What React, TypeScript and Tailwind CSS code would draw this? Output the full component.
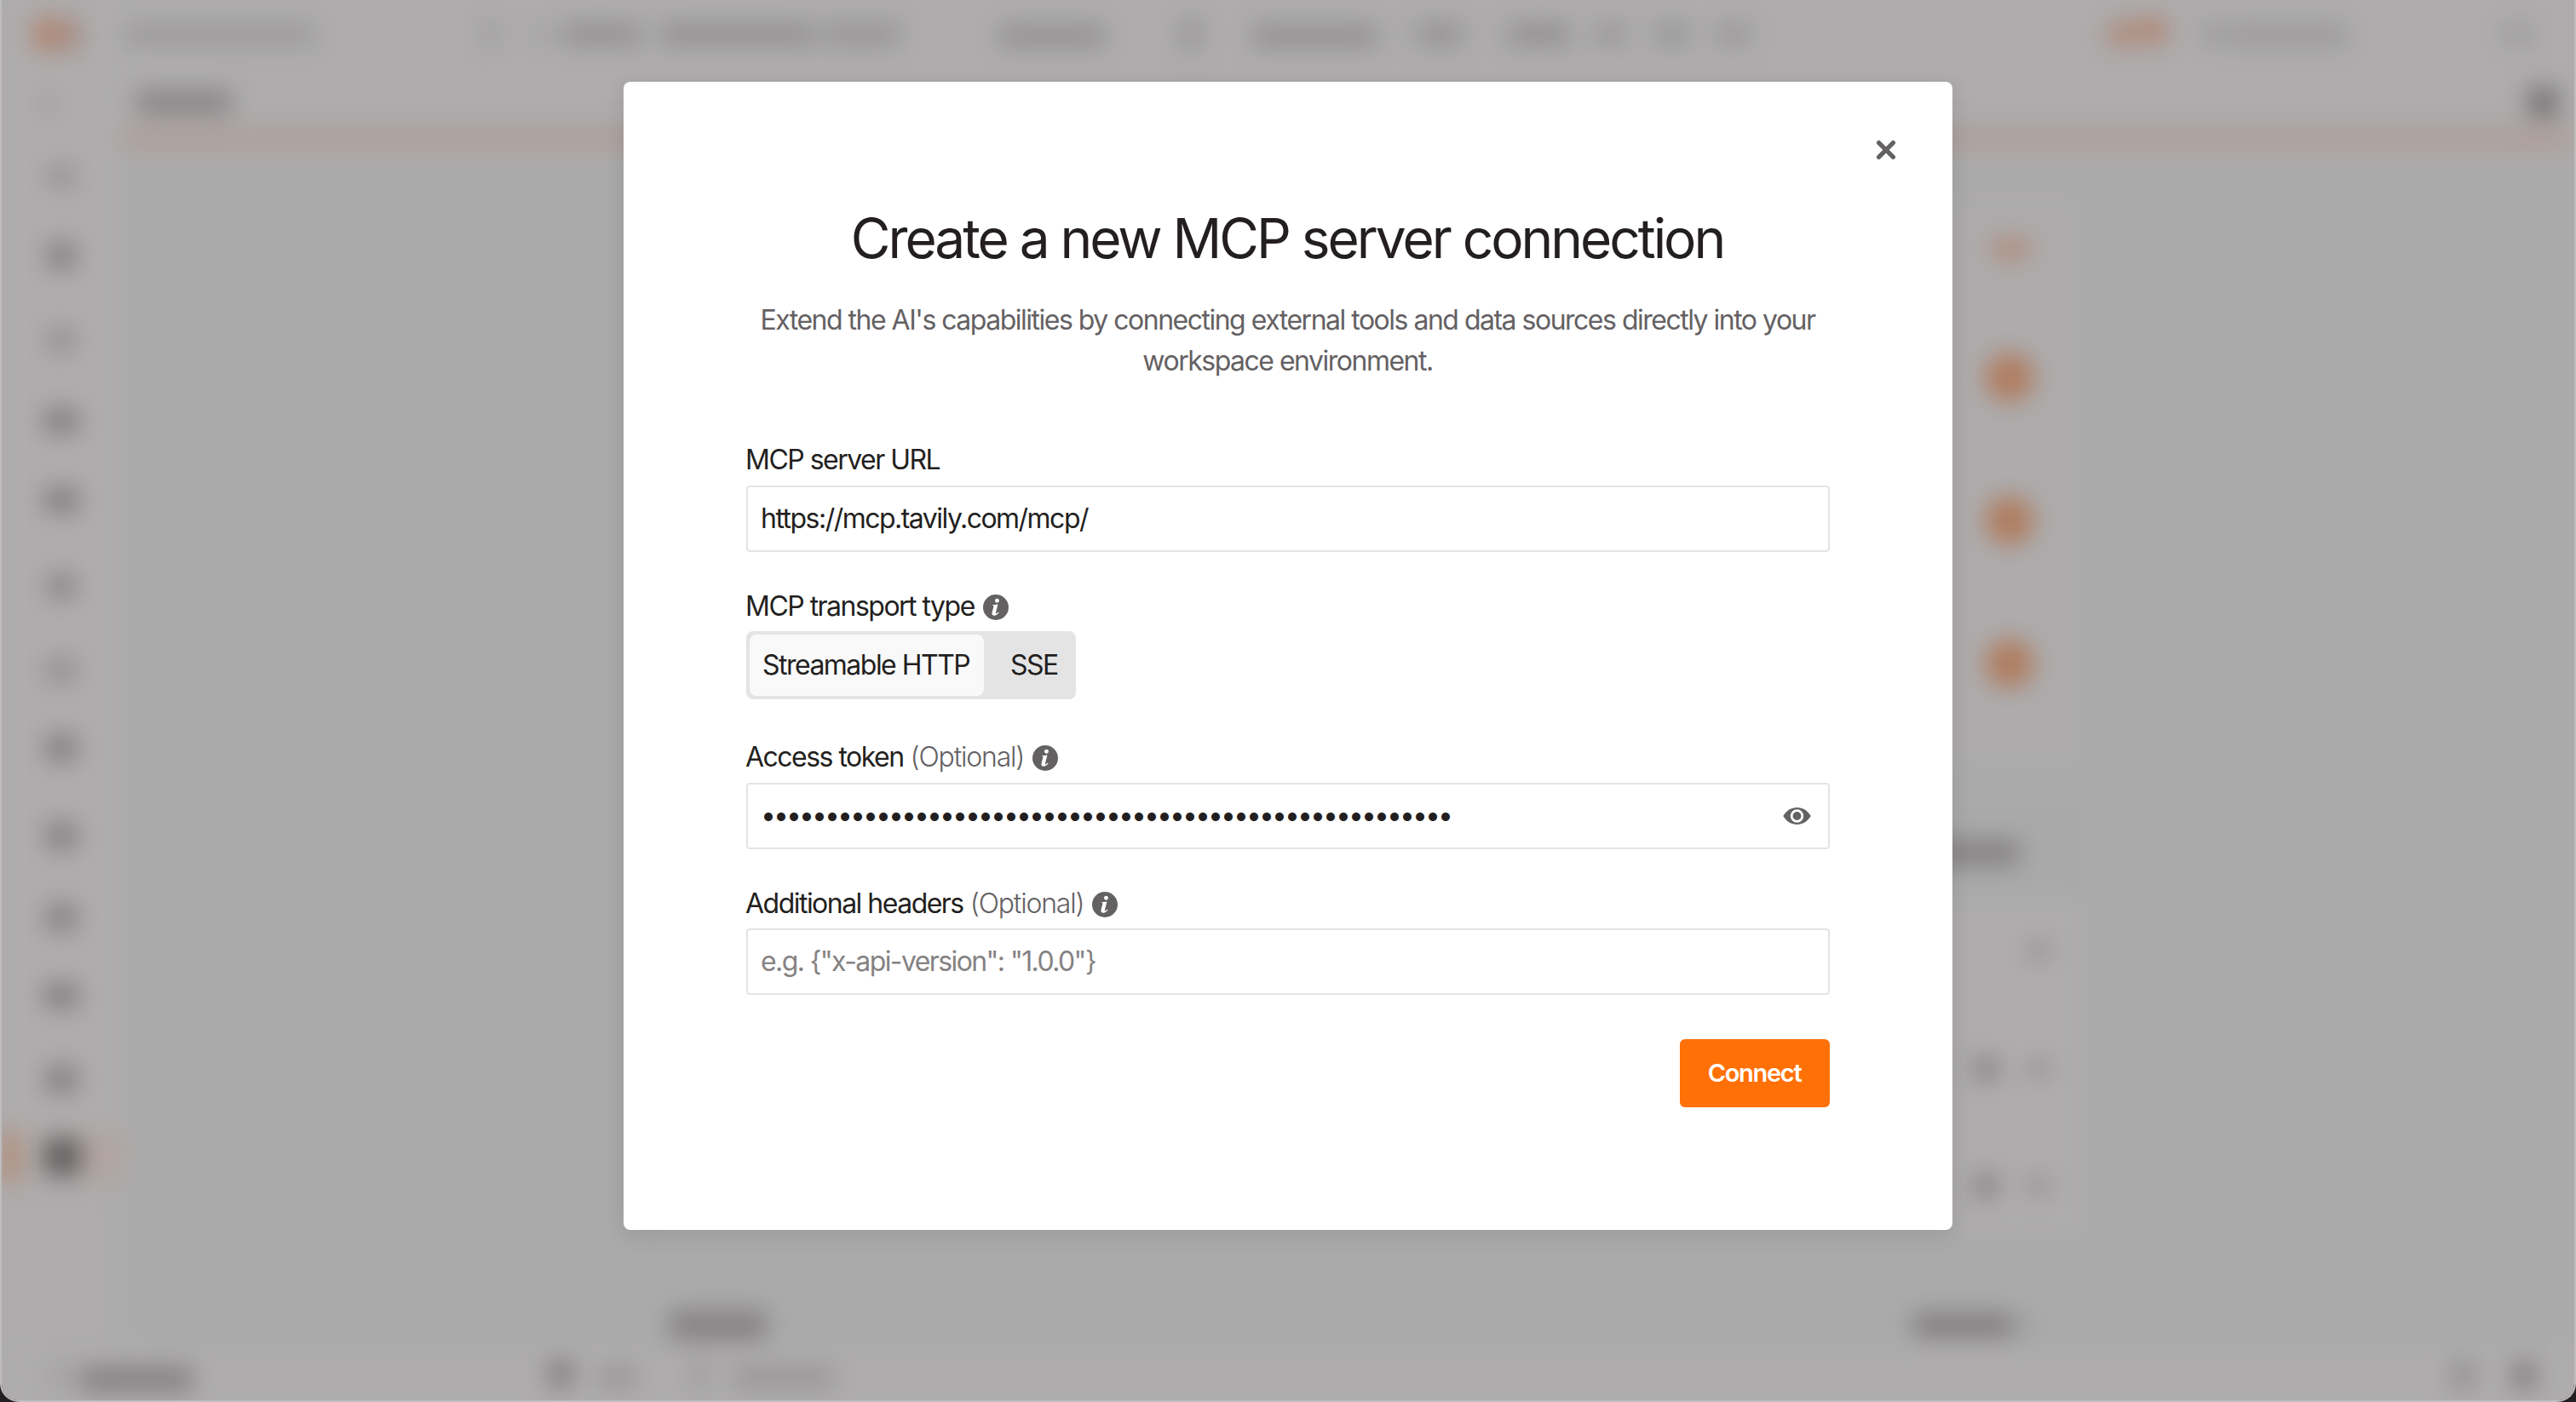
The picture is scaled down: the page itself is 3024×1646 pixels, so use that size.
import type { ReactNode } from "react";

/* ---------- Icons ---------- */

function CloseIcon() {
  return (
    <svg className="size-6" viewBox="0 0 24 24" fill="none" stroke="#646163" strokeWidth="5.2" strokeLinecap="round">
      <path d="M3.6 3.6 20.4 20.4M20.4 3.6 3.6 20.4" />
    </svg>
  );
}

function InfoIcon() {
  return (
    <svg className="size-[30px] shrink-0" viewBox="0 0 512 512">
      <circle cx="256" cy="256" r="256" fill="#646163" />
      <g fill="#fff">
        <circle cx="281" cy="124" r="41" />
        <path d="M186 213c30-4 68-10 112-17l-40 158c-5 19-3 26 5 26 11 0 24-10 42-31l14 10c-30 45-62 63-94 63-36 0-54-22-44-62l30-117c4-16 0-20-25-21z" />
      </g>
    </svg>
  );
}

function EyeIcon() {
  return (
    <svg className="h-5 w-[33px]" viewBox="0 0 33 20">
      <path d="M0.3 10C4 3.6 10 0 16.5 0S29 3.6 32.7 10C29 16.4 23 20 16.5 20S4 16.4 0.3 10z" fill="#646163" />
      <circle cx="16.5" cy="10" r="6.3" fill="none" stroke="#fff" strokeWidth="2.8" />
    </svg>
  );
}

/* ---------- Blurred application behind the dialog ---------- */

function Blob({ className }: { className: string }) {
  return <span className={`block shrink-0 ${className}`} />;
}

function TopBar() {
  return (
    <header className="flex h-20 shrink-0 items-center">
      <Blob className="ml-[36px] h-10 w-8 rounded-lg bg-[#b08875]" />
      <Blob className="h-10 w-6 rounded-lg bg-[#a68c82]" />
      <Blob className="ml-[54px] h-6 w-[220px] bg-[#9b999a]" />
      <Blob className="ml-[202px] h-8 w-2.5 bg-[#949293]" />
      <Blob className="ml-[46px] h-4 w-6 bg-[#a09e9f]" />
      <Blob className="ml-3 h-6 w-[90px] bg-[#918f90]" />
      <Blob className="ml-6 h-6 w-[180px] bg-[#918f90]" />
      <Blob className="ml-2.5 h-6 w-[90px] bg-[#969495]" />
      <Blob className="ml-[118px] mt-1 h-6 w-[122px] bg-[#918f90]" />
      <Blob className="ml-[92px] h-9 w-5 bg-[#949293]" />
      <Blob className="ml-[62px] mt-1 h-6 w-[146px] bg-[#918f90]" />
      <Blob className="ml-[30px] h-3 w-3 bg-[#a19fa0]" />
      <Blob className="ml-2 h-6 w-[50px] bg-[#929091]" />
      <Blob className="ml-[38px] h-3 w-3 bg-[#a19fa0]" />
      <Blob className="ml-2 h-6 w-[68px] bg-[#908e8f]" />
      <Blob className="ml-[30px] h-6 w-[36px] bg-[#989697]" />
      <Blob className="ml-[36px] h-6 w-[38px] bg-[#979596]" />
      <Blob className="ml-[34px] h-6 w-[38px] bg-[#989697]" />
      <Blob className="ml-[420px] h-8 w-8 rounded-full bg-[#b08875]" />
      <Blob className="-mt-2 ml-0.5 h-8 w-9 rounded-lg bg-[#b08875]" />
      <Blob className="ml-[44px] h-5 w-5 bg-[#949293]" />
      <Blob className="ml-2 mt-0.5 h-6 w-[138px] bg-[#9b999a]" />
      <Blob className="ml-[186px] h-5 w-8 bg-[#9a9899]" />
    </header>
  );
}

function TabBar() {
  return (
    <div className="flex h-[94px] shrink-0 flex-col justify-end">
      <div className="flex items-center justify-between pb-[12px] pl-[18px] pr-[19px]">
        <Blob className="h-7 w-[112px] bg-[#888586]" />
        <Blob className="size-9 rounded-lg bg-[#777475]" />
      </div>
      <Blob className="h-6 w-full bg-[#ae9d97]" />
    </div>
  );
}

const NAV = [
  "mt-[111px] h-6 w-5 bg-[#a09e9f] -ml-8",
  "mt-[60px] h-6 w-8 bg-[#929091]",
  "mt-[65px] h-8 w-8 bg-[#838081]",
  "mt-[69px] h-7 w-8 bg-[#929091]",
  "mt-[67px] h-7 w-10 bg-[#807d7e]",
  "mt-[65px] h-7 w-10 bg-[#807d7e]",
  "mt-[73px] h-7 w-8 bg-[#878485]",
  "mt-[71px] h-7 w-9 bg-[#929091]",
  "mt-[61px] h-8 w-9 bg-[#838081]",
  "mt-[71px] h-8 w-9 bg-[#848182]",
  "mt-[64px] h-8 w-9 bg-[#868384]",
  "mt-[62px] h-7 w-10 bg-[#807d7e]",
  "mt-[68px] h-8 w-9 bg-[#838081]",
];

function Sidebar() {
  return (
    <nav className="flex w-[140px] shrink-0 flex-col items-center bg-[#aeacad]">
      {NAV.map((c, i) => (
        <Blob key={i} className={c} />
      ))}
      <div className="mt-[45px] flex h-[60px] w-full items-center bg-gradient-to-r from-[#afadae] to-[#b1a39d]">
        <Blob className="h-full w-5 bg-[#b18870]" />
        <Blob className="ml-[29px] size-11 rounded-lg bg-[#636061]" />
      </div>
    </nav>
  );
}

function RowActions({ className, both }: { className: string; both?: boolean }) {
  return (
    <div className={`flex items-center justify-end gap-9 pr-[35px] ${className}`}>
      {both && <Blob className="size-7 rounded bg-[#868384]" />}
      <Blob className="size-6 bg-[#959394]" />
    </div>
  );
}

function Content() {
  return (
    <main className="flex flex-1 flex-col pl-[620px]">
      <section className="mt-[62px] flex h-[660px] w-[1678px] flex-col items-end bg-[#adabac] pr-[52px]">
        <Blob className="mr-1.5 mt-[44px] h-6 w-11 bg-[#b08c7a]" />
        <Blob className="mt-[110px] size-[58px] rounded-full bg-[#b07d60]" />
        <Blob className="mt-[110px] size-[58px] rounded-full bg-[#b07d60]" />
        <Blob className="mt-[110px] size-[58px] rounded-full bg-[#b07d60]" />
      </section>
      <section className="mt-[52px] flex h-[500px] w-[1678px] flex-col bg-[#aaa9aa]">
        <div className="flex h-[106px] items-center justify-end pr-[70px]">
          <Blob className="h-7 w-[120px] bg-[#827f80]" />
        </div>
        <div className="flex flex-1 flex-col bg-[#aeacad]">
          <RowActions className="mt-[50px] h-6" />
          <RowActions className="mt-[115px] h-6" both />
          <RowActions className="mt-[113px] h-6" both />
        </div>
      </section>
      <section className="mt-[88px] flex h-[40px] w-[1678px] items-center justify-between pl-[24px] pr-[66px]">
        <Blob className="h-9 w-[114px] bg-[#868384]" />
        <div className="flex items-center gap-2">
          <Blob className="h-7 w-[116px] bg-[#807d7e]" />
          <Blob className="-mr-3 h-4 w-4 bg-[#9a9899]" />
        </div>
      </section>
    </main>
  );
}

function StatusBar() {
  return (
    <footer className="flex h-[60px] shrink-0 items-center bg-[#aeacad] pt-[2px]">
      <Blob className="ml-[56px] h-5 w-6 bg-[#9c9a9b]" />
      <Blob className="mt-2 ml-3 h-7 w-[132px] bg-[#827f80]" />
      <Blob className="-mt-1 ml-[418px] h-8 w-[28px] bg-[#807d7e]" />
      <Blob className="mt-1 ml-[30px] h-6 w-[46px] bg-[#979596]" />
      <Blob className="-mt-1 ml-[66px] h-8 w-3.5 bg-[#959394]" />
      <Blob className="mt-1 ml-[32px] h-6 w-[120px] bg-[#979596]" />
      <Blob className="ml-auto h-8 w-7 bg-[#929091]" />
      <Blob className="ml-[44px] mr-[45px] h-8 w-7 bg-[#827f80]" />
    </footer>
  );
}

function BlurredApp() {
  return (
    <div aria-hidden="true" className="relative h-full overflow-hidden bg-[#aeacad]">
      <div className="flex h-full w-[3020px] blur-[14px]">
        <div className="flex h-full w-full flex-col">
          <div className="flex min-h-0 flex-1">
            <div className="-mr-[140px] h-full w-[140px] shrink-0">
              <Sidebar />
            </div>
            <div className="flex min-w-0 flex-1 flex-col">
              <TopBar />
              <div className="ml-[140px] flex min-h-0 flex-1 flex-col">
                <TabBar />
                <div className="flex min-h-0 flex-1 overflow-hidden bg-[#abaaab]">
                  <Content />
                </div>
              </div>
            </div>
          </div>
          <StatusBar />
        </div>
      </div>
    </div>
  );
}

/* ---------- Dialog ---------- */

function Label({ children, optional, info }: { children: ReactNode; optional?: boolean; info?: boolean }) {
  return (
    <div className="-ml-px flex h-12 items-center whitespace-nowrap">
      <span>{children}</span>
      {optional && <span className="ml-2 font-light tracking-[-1.2px] text-[#646163]">(Optional)</span>}
      {info && (
        <span className="ml-2.5 mt-px">
          <InfoIcon />
        </span>
      )}
    </div>
  );
}

const FIELD = "flex h-[78px] items-center rounded-[4px] border-2 border-[#e5e4e5] bg-white pl-[15px] pr-4";

function ConnectionDialog() {
  return (
    <div
      role="dialog"
      className="flex h-[1348px] w-[1560px] flex-col rounded-[8px] bg-white px-[144px] text-[32px] leading-[48px] tracking-[-1.52px] text-[#231f20] shadow-[0_6px_24px_rgba(35,31,32,0.12)]"
    >
      <div className="-mr-[78px] flex h-[92px] items-end justify-end">
        <button className="flex" aria-label="Close">
          <CloseIcon />
        </button>
      </div>
      <h1 className="mt-[52px] pr-[2px] text-center text-[64px] leading-[80px] tracking-[-3.06px]">
        Create a new MCP server connection
      </h1>
      <p className="mt-[32px] pr-px text-center tracking-[-1.5px] text-[#646163]">
        Extend the AI's capabilities by connecting external tools and data sources directly into your
        <br />
        workspace environment.
      </p>

      <div className="mt-[68px]">
        <Label>MCP server URL</Label>
        <div className={`mt-[6px] ${FIELD}`}>https://mcp.tavily.com/mcp/</div>
      </div>

      <div className="mt-[40px]">
        <Label info>MCP transport type</Label>
        <div className="mt-[5px] flex h-20 w-[387px] rounded-[8px] bg-[#e5e4e5] p-1">
          <button className="flex h-full w-[275px] items-center rounded-[8px] bg-[#f9f9f9] pl-[15px]">
            Streamable HTTP
          </button>
          <button className="flex flex-1 items-center pl-[31px]">SSE</button>
        </div>
      </div>

      <div className="mt-[44px]">
        <Label optional info>
          Access token
        </Label>
        <div className={`mt-[6px] justify-between ${FIELD}`}>
          <span className="mb-0.5 tracking-[-3px]">{"•".repeat(54)}</span>
          <span className="mr-1">
            <EyeIcon />
          </span>
        </div>
      </div>

      <div className="mt-[40px]">
        <Label optional info>
          Additional headers
        </Label>
        <div className={`mt-[5px] tracking-[-1.6px] text-[#858283] ${FIELD}`}>{'e.g. {"x-api-version": "1.0.0"}'}</div>
      </div>

      <button className="mt-[52px] flex h-20 w-44 items-center justify-center self-end rounded-[6px] bg-[#ff7006] pr-px text-[29px] font-semibold tracking-[-1.3px] text-white">
        Connect
      </button>
    </div>
  );
}

export default function App() {
  return (
    <div className="relative h-[1646px] w-[3024px] overflow-hidden bg-[#231f20] font-['Inter',sans-serif]">
      <div className="h-full overflow-hidden rounded-b-[22px] border-x-2 border-b-2 border-[#bebcbd]">
        <BlurredApp />
      </div>
      <div className="absolute inset-0 flex items-start justify-center pt-24">
        <ConnectionDialog />
      </div>
    </div>
  );
}
